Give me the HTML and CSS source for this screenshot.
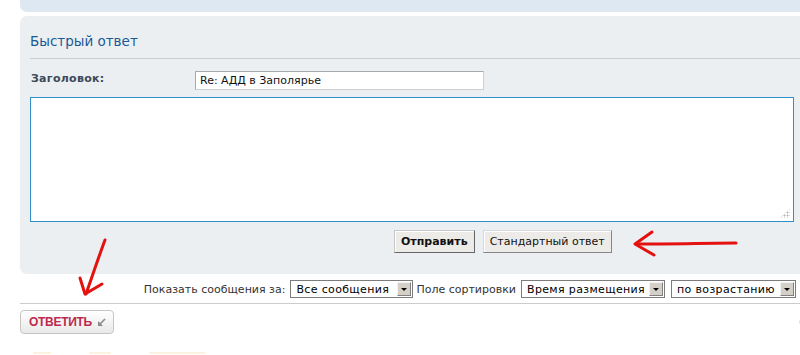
FILE: index.html
```html
<!DOCTYPE html>
<html>
<head>
  <meta charset="UTF-8">
  <title>Быстрый ответ</title>
  <link rel="stylesheet" href="styles.css">
</head>
<body>
  <div class="page">
    <div class="top-panel"></div>

    <div class="quick-reply">
      <h2>Быстрый ответ</h2>

      <div class="field-row">
        <label class="field-label">Заголовок:</label>
        <div class="subject-input">Re: АДД в Заполярье</div>
      </div>

      <div class="message-box">
        <span class="grip"></span>
      </div>

      <div class="submit-buttons">
        <button class="btn btn-main">Отправить</button>
        <button class="btn">Стандартный ответ</button>
      </div>
    </div>

    <div class="sort-bar">
      <span class="sort-text">Показать сообщения за:</span>
      <div class="fake-select sel-days"><span class="sel-value">Все сообщения</span><span class="sel-arrow"></span></div>
      <span class="sort-text sort-key-label">Поле сортировки</span>
      <div class="fake-select sel-key"><span class="sel-value">Время размещения</span><span class="sel-arrow"></span></div>
      <div class="fake-select sel-dir"><span class="sel-value">по возрастанию</span><span class="sel-arrow"></span></div>
    </div>

    <div class="action-bar">
      <a class="reply-btn">ОТВЕТИТЬ
        <svg class="reply-icon" width="9" height="9" viewBox="0 0 9 9">
          <path d="M8 1 L2.5 6.5" stroke="#8a8a8a" stroke-width="1.6" fill="none"/>
          <path d="M1 3 L1 8 L6 8 Z" fill="#8a8a8a"/>
        </svg>
      </a>
      <span class="edge-glyph">С</span>
    </div>

    <div class="footer-hint">
      <span class="hint hint-a"></span>
      <span class="hint hint-b"></span>
      <span class="hint hint-c"></span>
    </div>
  </div>

  <!-- red hand-drawn arrows over the screenshot -->
  <svg class="mark mark-right" width="130" height="30" viewBox="0 0 130 30">
    <path d="M124 14 C100 14 60 15 24 15" stroke="#e3120f" stroke-width="3" fill="none" stroke-linecap="round"/>
    <path d="M40 3 L23 15 L42 26" stroke="#e3120f" stroke-width="3" fill="none" stroke-linecap="round" stroke-linejoin="round"/>
  </svg>
  <svg class="mark mark-down" width="40" height="65" viewBox="0 0 40 65">
    <path d="M33 4 C27 20 21 38 14 58" stroke="#e3120f" stroke-width="3" fill="none" stroke-linecap="round"/>
    <path d="M8 42 L13 58 L30 48" stroke="#e3120f" stroke-width="3" fill="none" stroke-linecap="round" stroke-linejoin="round"/>
  </svg>
</body>
</html>
```

FILE: styles.css
```css
html, body {
  margin: 0;
  overflow: hidden;
}

body {
  background: #ffffff;
  color: #333333;
  font-family: 'DejaVu Sans', Verdana, sans-serif;
  font-size: 11px;
}

.page {
  width: 780px;
  padding-left: 20px;
}

.top-panel {
  height: 12px;
  background-color: #dde8f2;
  border-radius: 0 0 0 7px;
  margin-right: -20px;
}

.quick-reply {
  margin-top: 4px;
  margin-right: -20px;
  padding: 0 10px 21px 10px;
  background-color: #ebeff2;
  border-radius: 7px 0 0 7px;
}

.quick-reply h2 {
  margin: 0;
  padding: 16px 0 8px 0;
  font-family: 'DejaVu Sans', sans-serif;
  font-weight: normal;
  font-size: 13.5px;
  line-height: 18px;
  color: #1b5a95;
  border-bottom: 1px solid #cccccc;
}

.field-row {
  display: flex;
  margin-top: 12px;
}

.field-label {
  width: 164px;
  padding-left: 1px;
  padding-top: 1px;
  font-weight: bold;
  font-size: 11px;
  letter-spacing: 0.3px;
  color: #3d4857;
}

.subject-input {
  box-sizing: border-box;
  width: 289px;
  height: 19px;
  padding: 2px 4px;
  background: #ffffff;
  border: 1px solid #a9a9a9;
  border-right-color: #cfcfcf;
  border-bottom-color: #cfcfcf;
  font-size: 11px;
  line-height: 13px;
  color: #111111;
}

.message-box {
  position: relative;
  box-sizing: border-box;
  width: 764px;
  height: 125px;
  margin-top: 7px;
  background: #ffffff;
  border: 1px solid #2f8fc6;
}

.grip {
  position: absolute;
  right: 3px;
  bottom: 3px;
  width: 10px;
  height: 10px;
  background-image: radial-gradient(circle, #b9b2b0 0.9px, transparent 1.1px);
  background-size: 3px 3px;
  clip-path: polygon(100% 0, 100% 100%, 0 100%);
}

.submit-buttons {
  display: flex;
  gap: 8px;
  margin-top: 8px;
  padding-left: 364px;
}

.btn {
  height: 23px;
  padding: 0 6px;
  background: #ecebe8;
  border: 1px solid #858585;
  border-top-color: #d8d8d8;
  border-left-color: #d8d8d8;
  box-shadow: inset 1px 1px 0 #ffffff;
  font-family: 'DejaVu Sans', sans-serif;
  font-size: 11px;
  color: #111111;
}

.btn-main {
  font-weight: bold;
  border-color: #666666;
  border-top-color: #c8c8c8;
  border-left-color: #c8c8c8;
}

.sort-bar {
  display: flex;
  justify-content: flex-end;
  align-items: center;
  gap: 5px;
  padding: 6px 24px 5px 0;
  border-bottom: 1px solid #cccccc;
  margin-right: -20px;
}

.sort-text {
  color: #333333;
  font-size: 11px;
  white-space: nowrap;
}

.sort-key-label {
  margin-left: -2px;
}

.fake-select {
  box-sizing: border-box;
  display: flex;
  align-items: center;
  justify-content: space-between;
  flex-shrink: 0;
  height: 18px;
  padding: 0 1px 0 5px;
  background: #ffffff;
  border: 1px solid #7c7c7c;
  font-size: 11px;
  letter-spacing: 0.35px;
  color: #000000;
  white-space: nowrap;
}

.sel-days { width: 123px; }
.sel-key { width: 144px; }
.sel-dir { width: 125px; margin-left: 1px; }

.sel-arrow {
  position: relative;
  box-sizing: border-box;
  flex-shrink: 0;
  width: 14px;
  height: 14px;
  background: #d4d0c8;
  border: 1px solid #808080;
  border-top-color: #f4f4f4;
  border-left-color: #f4f4f4;
}

.sel-arrow::after {
  content: "";
  position: absolute;
  left: 3px;
  top: 5px;
  border-left: 3px solid transparent;
  border-right: 3px solid transparent;
  border-top: 3px solid #000000;
}

.action-bar {
  display: flex;
  justify-content: space-between;
  align-items: center;
  margin-top: 6px;
}

.reply-btn {
  box-sizing: border-box;
  display: flex;
  align-items: center;
  gap: 5px;
  width: 94px;
  height: 24px;
  padding-left: 8px;
  background: linear-gradient(#ffffff, #e9e9e9);
  border: 1px solid #c8c4c0;
  border-radius: 4px;
  font-family: 'Liberation Sans', Arial, sans-serif;
  font-weight: bold;
  font-size: 12px;
  color: #bc2a4d;
  letter-spacing: -0.3px;
}

.edge-glyph {
  margin-right: -7px;
  font-size: 11px;
  color: #555555;
}

.footer-hint {
  display: flex;
  gap: 38px;
  margin-top: 18px;
  padding-left: 13px;
}

.hint {
  height: 2px;
  background: #fdf1e0;
}

.hint-a { width: 18px; }
.hint-b { width: 22px; }
.hint-c { width: 56px; }

.mark {
  position: absolute;
}

.mark-right {
  left: 612px;
  top: 229px;
}

.mark-down {
  left: 72px;
  top: 236px;
}
```
